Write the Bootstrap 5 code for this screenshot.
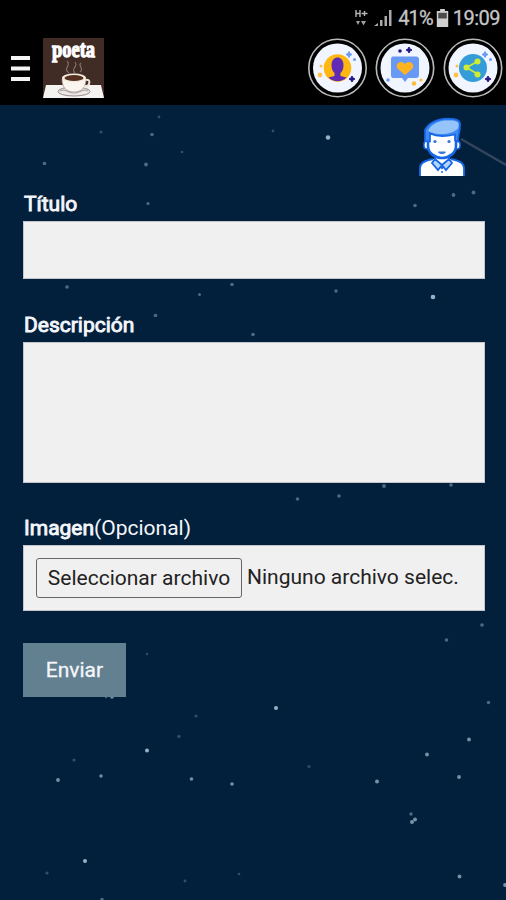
<!DOCTYPE html>
<html lang="es">
<head>
<meta charset="utf-8">
<meta name="viewport" content="width=device-width, initial-scale=1">
<title>Poeta</title>
<link href="https://cdn.jsdelivr.net/npm/bootstrap@5.3.0/dist/css/bootstrap.min.css" rel="stylesheet">
<style>
body{background:#02203b;color:#f4f6fb;font-family:Roboto,"Liberation Sans",sans-serif;width:506px;height:900px;overflow:hidden;position:relative}
.stars{position:absolute;left:0;top:0;z-index:0}
.top-area{height:105px;background:#000;position:relative}
.status-line{height:36px;padding-right:6px;font-size:20px;color:#c6c6c6;line-height:36px}
.pct{letter-spacing:-.9px;margin-right:3px;-webkit-text-stroke:.3px #c6c6c6}
.clock{letter-spacing:-.5px;-webkit-text-stroke:.3px #c6c6c6}
.menu-row{height:64px;padding:0 3px 0 11px}
.brand-pic{margin-left:13px}
.round-icons{gap:8px}
.form-area{padding:0 21px 0 23px;position:relative}
.avatar-row{height:86px;padding:12px 19px 0 0}
.lbl{font-size:21px;line-height:26px;display:block;color:#f4f6fb;padding-left:1px}
.lbl b{font-weight:400;-webkit-text-stroke:.9px #f4f6fb}
.field{display:block;width:100%;border-radius:0;background:#f0f0f0;border:1px solid #c4c4cc;padding:0 12px;color:#222}
.field:focus{background:#f0f0f0}
.h-title{height:58px}
.h-desc{height:141px;resize:none}
.h-file{height:66px;font-size:21px}
.next-lbl{margin-top:33px}
.pick{width:206px;height:40px;border:1px solid #666;border-radius:3px;padding:0;font-size:21px;line-height:36px;color:#222;background:#f0f0f0;letter-spacing:0;flex:none}
.picked{margin-left:5px;white-space:nowrap;letter-spacing:0}
.h-desc + .lbl{margin-top:32px}
.send{width:103px;height:54px;border-radius:0;border:0;background:#62808f;color:#f4f6fb;font-size:21px;line-height:52px;padding:0;margin-top:32px;-webkit-text-stroke:.3px #f4f6fb}
</style>
<script src="https://cdn.jsdelivr.net/npm/bootstrap@5.3.0/dist/js/bootstrap.bundle.min.js"></script>
</head>
<body>
<svg class="stars" width="506" height="900" viewBox="0 0 506 900" aria-hidden="true">
<path d="M461 139L506 165" stroke="#33455c" stroke-width="2.4"/>
<g fill="#9ab0c6">
<circle cx="328" cy="137.500" r="2.300"/><circle cx="276" cy="708" r="2"/><circle cx="147" cy="750.500" r="2"/><circle cx="433" cy="297" r="2.300"/><circle cx="85" cy="861" r="2"/>
</g>
<g fill="#7790a8">
<circle cx="58" cy="780" r="1.900"/><circle cx="101" cy="776" r="1.700"/><circle cx="191.500" cy="779" r="1.800"/><circle cx="232" cy="784" r="1.800"/><circle cx="377" cy="781.500" r="2"/><circle cx="427" cy="754.500" r="1.900"/><circle cx="469" cy="739.500" r="1.900"/><circle cx="459" cy="777" r="1.900"/><circle cx="459.500" cy="876.500" r="1.900"/><circle cx="412" cy="822" r="2"/><circle cx="415" cy="819.500" r="2"/><circle cx="112" cy="697" r="1.800"/><circle cx="505" cy="885" r="1.900"/>
</g>
<g fill="#506983">
<circle cx="152" cy="134.500" r="1.800"/><circle cx="44.500" cy="163.500" r="1.800"/><circle cx="146" cy="164.500" r="1.900"/><circle cx="148" cy="203.500" r="1.600"/><circle cx="415" cy="205.500" r="1.800"/><circle cx="453.500" cy="195" r="1.900"/><circle cx="473.500" cy="192.500" r="1.900"/><circle cx="67" cy="287" r="1.800"/><circle cx="232" cy="284.500" r="1.800"/><circle cx="199.500" cy="294.500" r="1.500"/><circle cx="155.500" cy="315.500" r="1.800"/><circle cx="253" cy="334.500" r="1.800"/><circle cx="336" cy="291" r="1.700"/><circle cx="384" cy="486" r="1.900"/><circle cx="339" cy="496" r="1.800"/><circle cx="297.500" cy="499" r="1.800"/><circle cx="451" cy="485" r="1.800"/><circle cx="482" cy="625" r="1.800"/><circle cx="446.500" cy="640" r="1.800"/><circle cx="488.500" cy="702.500" r="1.700"/><circle cx="411" cy="814" r="1.700"/><circle cx="102" cy="899.500" r="1.800"/><circle cx="106" cy="697" r="1.200"/>
</g>
<g fill="#334d68">
<circle cx="101" cy="132" r="1.600"/><circle cx="159" cy="117" r="1.400"/><circle cx="182" cy="152" r="1.300"/><circle cx="273" cy="131" r="1.400"/><circle cx="196" cy="716" r="1.600"/><circle cx="179" cy="736.500" r="1.700"/><circle cx="74" cy="760" r="1.600"/><circle cx="309" cy="766.500" r="1.600"/><circle cx="47" cy="873" r="1.600"/><circle cx="185" cy="881" r="1.400"/><circle cx="239" cy="874" r="1.300"/><circle cx="147" cy="654" r="1.200"/>
</g>
</svg>

<header class="top-area">
<div class="status-line d-flex justify-content-end align-items-center">
<svg width="44" height="24" viewBox="354 6 44 24" aria-hidden="true">
<path d="M356 10v7M360 10v7M356 13.500h4M361.500 13.500h6M364.500 11v5" stroke="#b8b8b8" stroke-width="1.400" fill="none"/>
<path d="M356 21l2 4 2-4zM361 21h5l-2.500 4.500z" fill="#a0a0a0"/>
<path d="M374 26l4-3v3zM380 20h2.500v6H380zM384.500 16h2.500v10h-2.500zM389 10h2.500v16H389z" fill="#aaa"/>
</svg>
<span class="pct">41%</span>
<svg width="13" height="19" viewBox="0 0 13 20" aria-hidden="true"><path d="M4 0h5v2h3.500v17H.5V2H4z" fill="#d0d0d0"/><path d="M2 4h9v6H2z" fill="#4a4a4a"/></svg>
<span class="clock ms-1">19:09</span>
</div>
<div class="menu-row d-flex align-items-center justify-content-between">
<div class="d-flex align-items-center">
<svg width="19" height="27" viewBox="0 0 19 27" role="img" aria-label="Menú"><path d="M0 3h19M0 13.500h19M0 24h19" stroke="#f4f4f4" stroke-width="4"/></svg>
<svg class="brand-pic" width="61" height="60" viewBox="0 0 61 60" role="img" aria-label="poeta">
<path d="M0 0h61v60H0z" fill="#402c25"/>
<path d="M3 47h55l3 13H0z" fill="#f5f3f2"/>
<text transform="translate(9 19) scale(1 1.18)" textLength="43" lengthAdjust="spacingAndGlyphs" font-family="Liberation Serif,serif" font-weight="700" font-size="20" fill="#fff" stroke="#fff" stroke-width="1.1">poeta</text>
<path d="M26 35c-7-5 3-7-2-12M32 35c-5-5 4-6 0-11M37 34c5-4-3-6 1-9" fill="none" stroke="#80706a" stroke-width="1.200"/>
<ellipse cx="31" cy="53.500" rx="16" ry="4.500" fill="#eee9e6" stroke="#958984"/>
<path d="M19 41c0 9 5 13 12 13s12-4 12-13z" fill="#faf5ef" stroke="#a89287" stroke-width=".7"/>
<path d="M42 42c6-2 6 6-1 7" fill="none" stroke="#eee5dd" stroke-width="2"/>
<ellipse cx="31" cy="40" rx="12" ry="4.500" fill="#f5ebe1"/><ellipse cx="31" cy="40" rx="9.500" ry="3" fill="#553020"/>
<path d="M17 53c5-3 8 2 14 2s9-5 14-2" fill="none" stroke="#aaa" stroke-width="1.200"/>
</svg>
</div>
<div class="round-icons d-flex">
<svg width="60" height="60" viewBox="0 0 60 60" role="img" aria-label="Perfil">
<circle cx="30.500" cy="30" r="28.700" fill="#000" stroke="#b9b9b9" stroke-width="1.600"/><circle cx="30.500" cy="30" r="24.500" fill="#f1f5ff"/>
<circle cx="30.500" cy="30" r="13.800" fill="#ffb812"/>
<path d="M24.500 27c0-10 12-10 12 0 0 4-1 6-3 8v3l6 1.500c-5 5-13 5-18 0l6-1.500v-3c-2-2-3-4-3-8z" fill="#612bb5"/>
<path d="M42 13.500l1 2 2 1-2 1-1 2-1-2-2-1 2-1z" fill="#699bf5" stroke="#699bf5"/><circle cx="47.500" cy="21.500" r="1.500" fill="#699bf5"/>
<path d="M45 38l1 2 2 1-2 1-1 2-1-2-2-1 2-1z" fill="#271387" stroke="#271387"/>
<circle cx="13" cy="37" r="2.400" fill="#ffc04a"/><circle cx="14" cy="28" r="1.500" fill="#ffc04a"/>
</svg>
<svg width="60" height="60" viewBox="0 0 60 60" role="img" aria-label="Favoritos">
<circle cx="30" cy="30" r="28.700" fill="#000" stroke="#b9b9b9" stroke-width="1.600"/><circle cx="30" cy="30" r="24.500" fill="#f1f5ff"/>
<path d="M18 18.500h23q3 0 3 3V37q0 3-3 3h-8l-3 4-3-4h-9q-2 0-2-3V21.500q0-3 2-3z" fill="#6799f5"/>
<path d="M30 37l-7-6c-4-4 2-10 7-5 5-5 11 1 7 5z" fill="#ffb31e"/>
<path d="M34 9l1 2 2 1-2 1-1 2-1-2-2-1 2-1z" fill="#271387" stroke="#271387"/><circle cx="25" cy="13" r="1.800" fill="#271387"/>
<circle cx="13" cy="42" r="1.700" fill="#699bf5"/><circle cx="39" cy="45.500" r="2.300" fill="#ffbd3c"/><circle cx="46" cy="42" r="1.600" fill="#ffbd3c"/>
</svg>
<svg width="60" height="60" viewBox="0 0 60 60" role="img" aria-label="Compartir">
<circle cx="30" cy="30" r="28.700" fill="#000" stroke="#b9b9b9" stroke-width="1.600"/><circle cx="30" cy="30" r="24.500" fill="#f1f5ff"/>
<circle cx="30" cy="30" r="14" fill="#349dd8"/>
<path d="M34.500 23.500L23.500 29.500 34.500 36" fill="none" stroke="#cfe735" stroke-width="1.700"/><g fill="#cfec32"><circle cx="34.500" cy="23.500" r="3"/><circle cx="23.500" cy="29.500" r="3"/><circle cx="34.500" cy="36.500" r="3"/></g>
<path d="M42 13.500l1 2 2 1-2 1-1 2-1-2-2-1 2-1z" fill="#699bf5" stroke="#699bf5"/><circle cx="47.500" cy="21.500" r="1.500" fill="#699bf5"/>
<path d="M45 38l1 2 2 1-2 1-1 2-1-2-2-1 2-1z" fill="#271387" stroke="#271387"/>
<circle cx="13" cy="37" r="2.400" fill="#ffc04a"/><circle cx="14" cy="28" r="1.500" fill="#ffc04a"/>
</svg>
</div>
</div>
</header>

<main class="form-area">
<div class="avatar-row d-flex justify-content-end">
<svg width="48" height="60" viewBox="0 0 48 60" role="img" aria-label="Usuario">
<path d="M2 59V51c0-5 4-7 13-9h18c9 2 13 4 13 9v8z" fill="#fff"/>
<path d="M2 59V51c0-5 4-7 13-9M46 59V51c0-5-4-7-13-9" fill="none" stroke="#1667e8" stroke-width="1.800"/>
<path d="M17 35h14v9l-7 7-7-7z" fill="#fff" stroke="#1667e8" stroke-width="2"/>
<rect x="6" y="24" width="6" height="8" rx="3" fill="#fff" stroke="#1667e8" stroke-width="1.500"/><rect x="36" y="24" width="6" height="8" rx="3" fill="#fff" stroke="#1667e8" stroke-width="1.500"/>
<path d="M10 16h28v13c0 7-7 12-14 12s-14-5-14-12z" fill="#fff" stroke="#1667e8" stroke-width="2.600"/>
<path d="M7 24V13C11 5 19 2 30 1.500c9 0 13 2 12 8 0 6-2 7-2 15l-3-1v-6c-9 2-19 2-25-1v8z" fill="#3f89f3" stroke="#1667e8" stroke-width="1.700"/>
<path d="M10 14C14 5 24 3 32 3.500c8 0 10 2 8 8-7 7-22 7-30 2.500z" fill="#95c4fa"/>
<circle cx="17" cy="24.500" r="1.600" fill="#3377da"/><circle cx="31" cy="24.500" r="1.600" fill="#3377da"/><path d="M20.500 35c1 2 6 2 7 0z" fill="#3979df" stroke="#3979df"/>
<path d="M17 42l-3 4 6 7 4-5 4 5 6-7-3-4-7 6z" fill="#b3d4fc" stroke="#1667e8" stroke-width="1.800"/><circle cx="24" cy="55" r="1" fill="#1667e8"/>
</svg>
</div>
<label class="lbl mb-1" for="t"><b>Título</b></label>
<input class="form-control field h-title" id="t" type="text">
<label class="lbl mb-1 next-lbl" for="d"><b>Descripción</b></label>
<textarea class="form-control field h-desc" id="d"></textarea>
<span class="lbl mb-1"><b>Imagen</b>(Opcional)</span>
<div class="field h-file d-flex align-items-center">
<button class="btn pick" type="button">Seleccionar archivo</button><span class="picked">Ninguno archivo selec.</span>
</div>
<button class="btn send" type="submit">Enviar</button>
</main>
</body>
</html>
